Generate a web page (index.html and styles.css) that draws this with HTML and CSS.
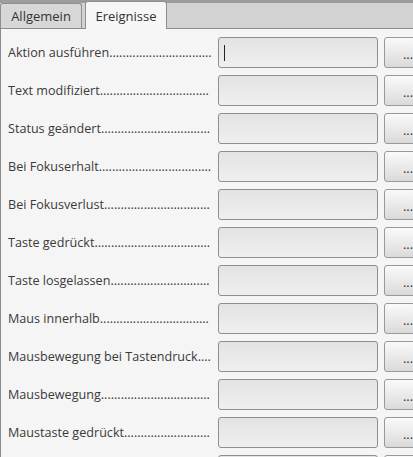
FILE: index.html
```html
<!DOCTYPE html>
<html>
<head>
<meta charset="utf-8">
<link rel="stylesheet" href="styles.css">
</head>
<body>
<div class="tabbar">
  <div class="tab">Allgemein</div>
  <div class="tab active">Ereignisse</div>
</div>
<div class="panel">
  <div class="row"><div class="label">Aktion ausführen...................................................................</div><div class="input focused"><span class="caret"></span></div><div class="btn">...</div></div>
  <div class="row"><div class="label">Text modifiziert...................................................................</div><div class="input"></div><div class="btn">...</div></div>
  <div class="row"><div class="label">Status geändert...................................................................</div><div class="input"></div><div class="btn">...</div></div>
  <div class="row"><div class="label">Bei Fokuserhalt...................................................................</div><div class="input"></div><div class="btn">...</div></div>
  <div class="row"><div class="label">Bei Fokusverlust...................................................................</div><div class="input"></div><div class="btn">...</div></div>
  <div class="row"><div class="label">Taste gedrückt...................................................................</div><div class="input"></div><div class="btn">...</div></div>
  <div class="row"><div class="label">Taste losgelassen...................................................................</div><div class="input"></div><div class="btn">...</div></div>
  <div class="row"><div class="label">Maus innerhalb...................................................................</div><div class="input"></div><div class="btn">...</div></div>
  <div class="row"><div class="label">Mausbewegung bei Tastendruck...................................................................</div><div class="input"></div><div class="btn">...</div></div>
  <div class="row"><div class="label">Mausbewegung...................................................................</div><div class="input"></div><div class="btn">...</div></div>
  <div class="row"><div class="label">Maustaste gedrückt...................................................................</div><div class="input"></div><div class="btn">...</div></div>
  <div class="row"><div class="label">Maustaste losgelassen...................................................................</div><div class="input"></div><div class="btn">...</div></div>
</div>
</body>
</html>
```
FILE: styles.css
```css
html, body {
  margin: 0;
  padding: 0;
  overflow: hidden;
}
body {
  width: 413px;
  height: 457px;
  font-family: "Open Sans", "DejaVu Sans", sans-serif;
  font-size: 13px;
  color: #3c3c3c;
  background: #f5f5f5;
}
.tabbar {
  display: flex;
  align-items: flex-end;
  height: 29px;
  box-sizing: border-box;
  background: #d2d2d2;
  border-top: 3px solid #9c9c9c;
  gap: 3px;
  border-bottom: 1px solid #8c8c8c;
}
.tab {
  box-sizing: border-box;
  height: 25px;
  width: 82px;
  display: flex;
  align-items: center;
  justify-content: center;
  background: #d7d7d7;
  border: 1px solid #8e8e8e;
  border-bottom: none;
  border-radius: 3px 3px 0 0;
  font-size: 13px;
  color: #333;
  flex-shrink: 0;
}
.tab.active {
  height: 28px;
  background: #f6f6f6;
  margin-bottom: -1px;
}
.panel {
  border-left: 1px solid #8c8c8c;
  padding: 8px 0 0 7px;
  display: flex;
  flex-direction: column;
  gap: 7px;
}
.row {
  display: flex;
  align-items: center;
  height: 31px;
  flex-shrink: 0;
}
.label {
  width: 204px;
  flex-shrink: 0;
  white-space: nowrap;
  overflow: hidden;
  text-overflow: ellipsis;
  font-size: 12.6px;
  color: #3a3a3a;
}
.input {
  flex-shrink: 0;
  margin-left: 6px;
  width: 160px;
  height: 31px;
  box-sizing: border-box;
  border: 1px solid #8f8f8f;
  border-radius: 3px;
  background: linear-gradient(#e3e3e3, #efefef);
  display: flex;
  align-items: center;
  padding-left: 5px;
}
.caret {
  width: 1px;
  height: 16px;
  background: #222;
}
.btn {
  flex-shrink: 0;
  margin-left: 6px;
  width: 48px;
  height: 31px;
  box-sizing: border-box;
  border: 1px solid #999;
  border-radius: 3px;
  background: linear-gradient(#fafafa, #dadada);
  display: flex;
  align-items: center;
  justify-content: center;
  padding-top: 2px;
  font-size: 13px;
  color: #333;
}
```
